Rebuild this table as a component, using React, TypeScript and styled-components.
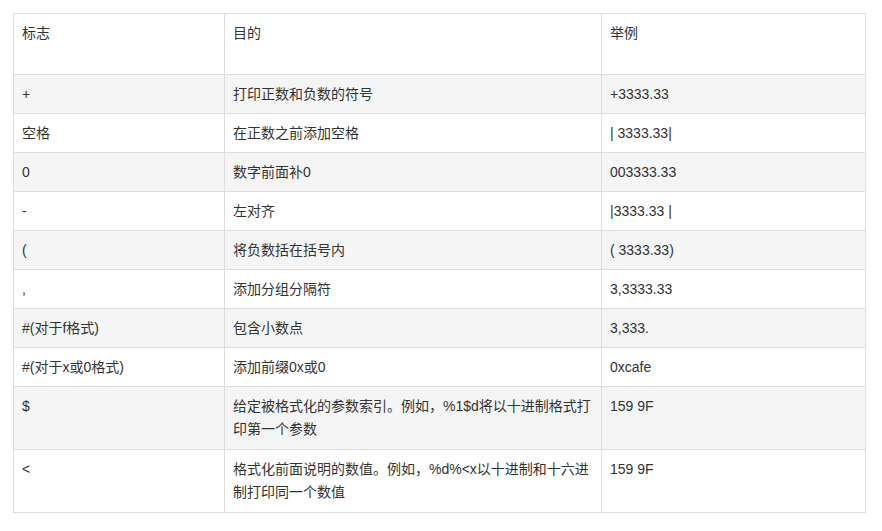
import React from "react";
import styled, { createGlobalStyle } from "styled-components";

const Global = createGlobalStyle`
  html, body { margin: 0; padding: 0; background: #fff; }
  body { font-family: "Liberation Sans", Arial, "Noto Sans CJK SC", sans-serif; }
`;

const Page = styled.div`
  padding: 13px 17px 13px 13px;
`;

const Table = styled.table`
  width: 852px;
  border-collapse: collapse;
  table-layout: fixed;
  font-size: 14px;
  line-height: 22px;
  color: #333;
`;

const HeadCell = styled.th`
  border: 1px solid #ddd;
  text-align: left;
  font-weight: normal;
  vertical-align: top;
  padding: 8px 8px 30px;
`;

const Row = styled.tr<{ $striped: boolean }>`
  background: ${(p) => (p.$striped ? "#f5f5f5" : "#fff")};
`;

const Cell = styled.td<{ $multi?: boolean }>`
  border: 1px solid #ddd;
  vertical-align: top;
  padding: 8px;
  line-height: ${(p) => (p.$multi ? "23px" : "22px")};
  word-break: break-all;
`;

type Item = { flag: string; purpose: string; example: string; multi?: boolean };

const items: Item[] = [
  { flag: "+", purpose: "打印正数和负数的符号", example: "+3333.33" },
  { flag: "空格", purpose: "在正数之前添加空格", example: "| 3333.33|" },
  { flag: "0", purpose: "数字前面补0", example: "003333.33" },
  { flag: "-", purpose: "左对齐", example: "|3333.33 |" },
  { flag: "(", purpose: "将负数括在括号内", example: "( 3333.33)" },
  { flag: ",", purpose: "添加分组分隔符", example: "3,3333.33" },
  { flag: "#(对于f格式)", purpose: "包含小数点", example: "3,333." },
  { flag: "#(对于x或0格式)", purpose: "添加前缀0x或0", example: "0xcafe" },
  {
    flag: "$",
    purpose: "给定被格式化的参数索引。例如，%1$d将以十进制格式打印第一个参数",
    example: "159 9F",
    multi: true,
  },
  {
    flag: "<",
    purpose: "格式化前面说明的数值。例如，%d%<x以十进制和十六进制打印同一个数值",
    example: "159 9F",
    multi: true,
  },
];

export default function App() {
  return (
    <Page>
      <Global />
      <Table>
        <colgroup>
          <col style={{ width: 211 }} />
          <col style={{ width: 377 }} />
          <col style={{ width: 264 }} />
        </colgroup>
        <thead>
          <tr>
            <HeadCell>标志</HeadCell>
            <HeadCell>目的</HeadCell>
            <HeadCell>举例</HeadCell>
          </tr>
        </thead>
        <tbody>
          {items.map((it, i) => (
            <Row key={i} $striped={i % 2 === 0}>
              <Cell $multi={it.multi}>{it.flag}</Cell>
              <Cell $multi={it.multi}>{it.purpose}</Cell>
              <Cell $multi={it.multi}>{it.example}</Cell>
            </Row>
          ))}
        </tbody>
      </Table>
    </Page>
  );
}
